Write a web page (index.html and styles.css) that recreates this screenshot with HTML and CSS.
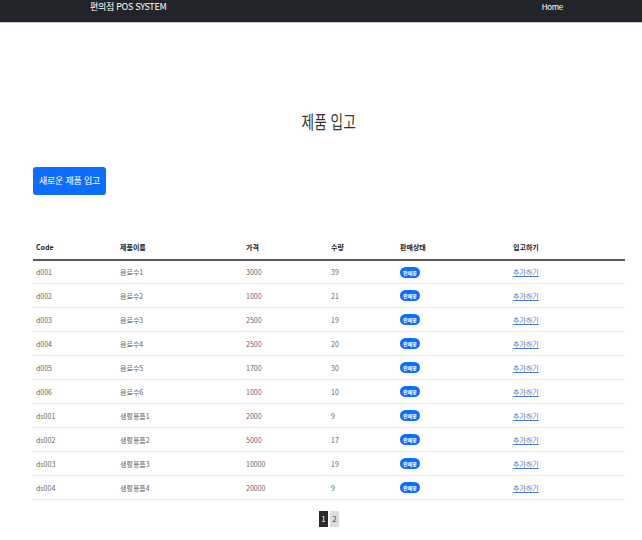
FILE: index.html
```html
<!DOCTYPE html>
<html lang="ko">
<head>
<meta charset="utf-8">
<title>제품 입고</title>
<link rel="stylesheet" href="styles.css">
</head>
<body>
<nav class="navbar">
  <a class="brand" href="#">편의점 POS SYSTEM</a>
  <a class="nav-link" href="#">Home</a>
</nav>
<main class="container">
  <h2 class="title"><span class="title-text">제품 입고</span></h2>
  <div class="actions"><button class="btn">새로운 제품 입고</button></div>
  <table class="table">
    <colgroup>
      <col class="c1"><col class="c2"><col class="c3"><col class="c4"><col class="c5"><col class="c6">
    </colgroup>
    <thead>
      <tr><th>Code</th><th>제품이름</th><th>가격</th><th>수량</th><th>판매상태</th><th>입고하기</th></tr>
    </thead>
    <tbody>
      <tr><td>d001</td><td>음료수1</td><td>3000</td><td>39</td><td><span class="badge">판매중</span></td><td><a href="#">추가하기</a></td></tr>
      <tr><td>d002</td><td>음료수2</td><td>1000</td><td>21</td><td><span class="badge">판매중</span></td><td><a href="#">추가하기</a></td></tr>
      <tr><td>d003</td><td>음료수3</td><td>2500</td><td>19</td><td><span class="badge">판매중</span></td><td><a href="#">추가하기</a></td></tr>
      <tr><td>d004</td><td>음료수4</td><td>2500</td><td>20</td><td><span class="badge">판매중</span></td><td><a href="#">추가하기</a></td></tr>
      <tr><td>d005</td><td>음료수5</td><td>1700</td><td>30</td><td><span class="badge">판매중</span></td><td><a href="#">추가하기</a></td></tr>
      <tr><td>d006</td><td>음료수6</td><td>1000</td><td>10</td><td><span class="badge">판매중</span></td><td><a href="#">추가하기</a></td></tr>
      <tr><td>ds001</td><td>생활용품1</td><td>2000</td><td>9</td><td><span class="badge">판매중</span></td><td><a href="#">추가하기</a></td></tr>
      <tr><td>ds002</td><td>생활용품2</td><td>5000</td><td>17</td><td><span class="badge">판매중</span></td><td><a href="#">추가하기</a></td></tr>
      <tr><td>ds003</td><td>생활용품3</td><td>10000</td><td>19</td><td><span class="badge">판매중</span></td><td><a href="#">추가하기</a></td></tr>
      <tr><td>ds004</td><td>생활용품4</td><td>20000</td><td>9</td><td><span class="badge">판매중</span></td><td><a href="#">추가하기</a></td></tr>
    </tbody>
  </table>
  <div class="pagination">
    <span class="page active">1</span>
    <span class="page">2</span>
  </div>
</main>
</body>
</html>
```
FILE: styles.css
```css
* { box-sizing: border-box; }
html, body { margin: 0; padding: 0; background: #fff; }
body {
  font-family: "Noto Sans CJK KR", "Noto Sans", sans-serif;
  color: #212529;
}
.navbar {
  height: 23px;
  background: #212529;
  border-bottom: 1px solid #c8c8c8;
  display: flex;
  align-items: flex-start;
  padding: 1px 0 0 90px;
}
.brand {
  color: #fff;
  text-decoration: none;
  font-size: 9px;
  line-height: 12px;
  letter-spacing: -0.3px;
}
.nav-link {
  color: #fff;
  text-decoration: none;
  font-size: 8px;
  line-height: 12px;
  letter-spacing: -0.3px;
  margin-left: auto;
  margin-right: 79px;
}
.container {
  width: 592px;
  margin: 0 0 0 33px;
}
.title {
  margin: 86px 0 0;
  text-align: center;
  font-size: 18px;
  line-height: 24px;
  font-weight: 400;
  color: #333;
}
.title-text {
  display: inline-block;
  transform: scaleX(0.76);
}
.actions { margin-top: 32px; }
.btn {
  background: #0d6efd;
  color: #fff;
  border: none;
  border-radius: 3px;
  width: 73px;
  height: 28px;
  font-family: inherit;
  font-size: 9px;
  letter-spacing: -0.2px;
  padding: 0;
}
.table {
  margin-top: 41px;
  width: 592px;
  border-collapse: collapse;
  table-layout: fixed;
  font-size: 7px;
}
.c1 { width: 84px; } .c2 { width: 126px; } .c3 { width: 85px; }
.c4 { width: 69px; } .c5 { width: 113px; } .c6 { width: 115px; }
.table th {
  text-align: left;
  font-weight: 700;
  height: 24px;
  padding: 0 3px;
  border-bottom: 2px solid #5a5a5a;
  color: #222;
}
.table td {
  height: 24px;
  padding: 0 3px;
  border-bottom: 1px solid #ececec;
  color: #666;
}
.table a {
  color: #4a7fd0;
  text-decoration: underline;
}
.badge {
  display: inline-block;
  background: #0d6efd;
  color: #fff;
  font-size: 5px;
  font-weight: 700;
  border-radius: 6px;
  width: 20px;
  height: 11px;
  line-height: 11px;
  text-align: center;
  vertical-align: middle;
}
.pagination {
  display: flex;
  justify-content: center;
  gap: 2px;
  margin-top: 11px;
}
.page {
  width: 9px;
  height: 16px;
  line-height: 16px;
  text-align: center;
  font-size: 8px;
  background: #ddd;
  color: #444;
}
.page.active {
  background: #2a2a2a;
  color: #fff;
}
```
